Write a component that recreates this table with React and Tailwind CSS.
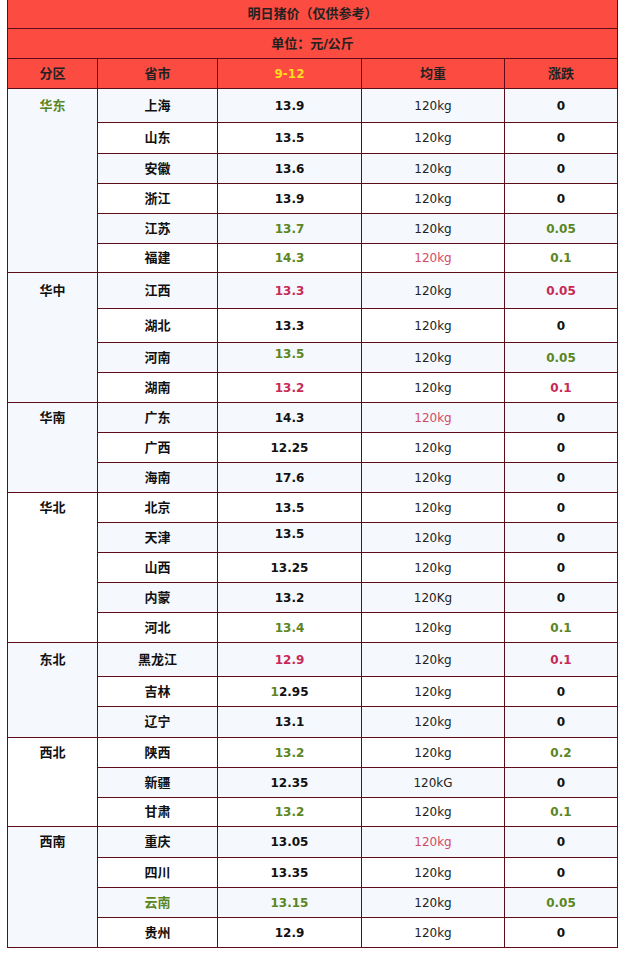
import React from "react";

const G = "text-[#5b8623]";
const R = "text-[#c72a55]";
const P = "text-[#d44a62]";
const K = "text-[#111111]";

const groups = [
  {
    name: "华东",
    nameCls: G,
    labelH: "h-[33px]",
    rows: [
      { h: "h-[34px]", city: "上海", price: "13.9", w: "120kg", d: "0" },
      { h: "h-[31px]", city: "山东", price: "13.5", w: "120kg", d: "0" },
      { h: "h-[30px]", city: "安徽", price: "13.6", w: "120kg", d: "0" },
      { h: "h-[30px]", city: "浙江", price: "13.9", w: "120kg", d: "0" },
      { h: "h-[30px]", city: "江苏", price: "13.7", pc: G, w: "120kg", d: "0.05", dc: G },
      { h: "h-[29px]", city: "福建", price: "14.3", pc: G, w: "120kg", wc: P, d: "0.1", dc: G },
    ],
  },
  {
    name: "华中",
    nameCls: K,
    labelH: "h-[35px]",
    rows: [
      { h: "h-[36px]", city: "江西", price: "13.3", pc: R, w: "120kg", d: "0.05", dc: R },
      { h: "h-[34px]", city: "湖北", price: "13.3", w: "120kg", d: "0" },
      { h: "h-[30px]", city: "河南", price: "13.5", pc: G, up: true, w: "120kg", d: "0.05", dc: G },
      { h: "h-[30px]", city: "湖南", price: "13.2", pc: R, w: "120kg", d: "0.1", dc: R },
    ],
  },
  {
    name: "华南",
    nameCls: K,
    labelH: "h-[29px]",
    rows: [
      { h: "h-[30px]", city: "广东", price: "14.3", w: "120kg", wc: P, d: "0" },
      { h: "h-[30px]", city: "广西", price: "12.25", w: "120kg", d: "0" },
      { h: "h-[30px]", city: "海南", price: "17.6", w: "120kg", d: "0" },
    ],
  },
  {
    name: "华北",
    nameCls: K,
    labelH: "h-[29px]",
    rows: [
      { h: "h-[30px]", city: "北京", price: "13.5", w: "120kg", d: "0" },
      { h: "h-[30px]", city: "天津", price: "13.5", up: true, w: "120kg", d: "0" },
      { h: "h-[30px]", city: "山西", price: "13.25", w: "120kg", d: "0" },
      { h: "h-[30px]", city: "内蒙", price: "13.2", w: "120Kg", d: "0" },
      { h: "h-[30px]", city: "河北", price: "13.4", pc: G, w: "120kg", d: "0.1", dc: G },
    ],
  },
  {
    name: "东北",
    nameCls: K,
    labelH: "h-[33px]",
    rows: [
      { h: "h-[34px]", city: "黑龙江", price: "12.9", pc: R, w: "120kg", d: "0.1", dc: R },
      {
        h: "h-[30px]",
        city: "吉林",
        price: (
          <>
            <span className={G}>1</span>2.95
          </>
        ),
        w: "120kg",
        d: "0",
      },
      { h: "h-[31px]", city: "辽宁", price: "13.1", w: "120kg", d: "0" },
    ],
  },
  {
    name: "西北",
    nameCls: K,
    labelH: "h-[29px]",
    rows: [
      { h: "h-[30px]", city: "陕西", price: "13.2", pc: G, w: "120kg", d: "0.2", dc: G },
      { h: "h-[30px]", city: "新疆", price: "12.35", w: "120kG", d: "0" },
      { h: "h-[29px]", city: "甘肃", price: "13.2", pc: G, w: "120kg", d: "0.1", dc: G },
    ],
  },
  {
    name: "西南",
    nameCls: K,
    labelH: "h-[30px]",
    rows: [
      { h: "h-[31px]", city: "重庆", price: "13.05", w: "120kg", wc: P, d: "0" },
      { h: "h-[30px]", city: "四川", price: "13.35", w: "120kg", d: "0" },
      { h: "h-[30px]", city: "云南", cc: G, price: "13.15", pc: G, w: "120kg", d: "0.05", dc: G },
      { h: "h-[30px]", city: "贵州", price: "12.9", w: "120kg", d: "0" },
    ],
  },
];

const BLUE = "bg-[#f5f9fe]";
const WHITE = "bg-white";

export default function App() {
  let idx = 0;
  return (
    <div className="min-h-[953px] bg-white pl-[7px] font-['DejaVu_Sans','Noto_Sans_CJK_SC',sans-serif] text-[#111111]">
      <div className="w-[611px] border-x border-[#5e0d18]">
        <div className="flex h-[29px] items-center justify-center border-b border-[#5e0d18] bg-[#fc4b40] text-[13px] font-bold text-[#222222]">
          明日猪价（仅供参考）
        </div>
        <div className="flex h-[30px] items-center justify-center border-b border-[#5e0d18] bg-[#fc4b40] text-[13px] font-bold text-[#222222]">
          单位：元/公斤
        </div>
        <div className="flex h-[30px] border-b border-[#5e0d18] bg-[#fc4b40] text-[13px] font-bold text-[#222222]">
          <div className="flex w-[90px] items-center justify-center border-r border-[#5e0d18]">分区</div>
          <div className="flex w-[120px] items-center justify-center border-r border-[#5e0d18]">省市</div>
          <div className="flex w-[144px] items-center justify-center border-r border-[#5e0d18] text-[12px] text-[#ffdd1e]">9-12</div>
          <div className="flex w-[143px] items-center justify-center border-r border-[#5e0d18]">均重</div>
          <div className="flex flex-1 items-center justify-center">涨跌</div>
        </div>
        {groups.map((g) => {
          const firstBg = idx % 2 === 0 ? BLUE : WHITE;
          const rows = g.rows.map((r) => {
            const bg = idx % 2 === 0 ? BLUE : WHITE;
            idx += 1;
            return { ...r, bg };
          });
          return (
            <div key={g.name} className="flex">
              <div className={`w-[90px] border-r border-b border-[#5e0d18] ${firstBg}`}>
                <div className={`flex ${g.labelH} items-center justify-center text-[13px] font-bold ${g.nameCls}`}>
                  {g.name}
                </div>
              </div>
              <div className="flex flex-1 flex-col">
                {rows.map((r) => (
                  <div key={r.city} className={`flex ${r.h} ${r.bg} border-b border-[#5e0d18]`}>
                    <div className={`flex w-[120px] items-center justify-center border-r border-[#5e0d18] text-[13px] font-bold ${r.cc || K}`}>
                      {r.city}
                    </div>
                    <div className={`flex w-[144px] items-center justify-center border-r border-[#5e0d18] text-[12px] font-bold ${r.pc || K}`}>
                      <span className={r.up ? "mb-[8px]" : ""}>{r.price}</span>
                    </div>
                    <div className={`flex w-[143px] items-center justify-center border-r border-[#5e0d18] text-[12px] ${r.wc || "text-[#222222]"}`}>
                      {r.w}
                    </div>
                    <div className={`flex flex-1 items-center justify-center text-[12px] font-bold ${r.dc || K}`}>
                      {r.d}
                    </div>
                  </div>
                ))}
              </div>
            </div>
          );
        })}
      </div>
    </div>
  );
}
